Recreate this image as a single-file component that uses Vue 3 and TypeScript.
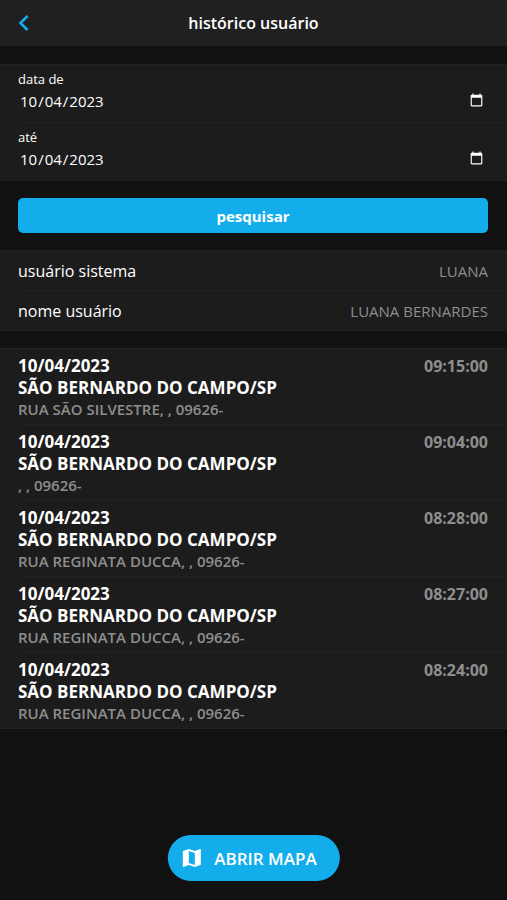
<script setup lang="ts">
import { ref } from 'vue'

interface Visit {
  date: string
  time: string
  city: string
  address: string
}

const dateFrom = ref('2023-10-04')
const dateTo = ref('2023-10-04')

const user = [
  { label: 'usuário sistema', value: 'LUANA' },
  { label: 'nome usuário', value: 'LUANA BERNARDES' },
]

const city = 'SÃO BERNARDO DO CAMPO/SP'
const visits: Visit[] = [
  { date: '10/04/2023', time: '09:15:00', city, address: 'RUA SÃO SILVESTRE, , 09626-' },
  { date: '10/04/2023', time: '09:04:00', city, address: ', , 09626-' },
  { date: '10/04/2023', time: '08:28:00', city, address: 'RUA REGINATA DUCCA, , 09626-' },
  { date: '10/04/2023', time: '08:27:00', city, address: 'RUA REGINATA DUCCA, , 09626-' },
  { date: '10/04/2023', time: '08:24:00', city, address: 'RUA REGINATA DUCCA, , 09626-' },
]
</script>

<template>
  <div class="page">
    <header class="navbar">
      <button class="back" type="button" aria-label="voltar">
        <svg width="12" height="18" viewBox="0 0 12 18" fill="none" stroke="currentColor" stroke-width="2.6">
          <path d="M9.500 2 L2.500 9 L9.500 16" />
        </svg>
      </button>
      <h1 class="title">histórico usuário</h1>
    </header>

    <main class="content">
      <form class="search" @submit.prevent>
        <div class="list">
          <div class="row field">
            <label for="date-from">data de</label>
            <input id="date-from" v-model="dateFrom" type="date" />
          </div>
          <div class="row field">
            <label for="date-to">até</label>
            <input id="date-to" v-model="dateTo" type="date" />
          </div>
        </div>
        <button class="submit" type="submit">pesquisar</button>
      </form>

      <dl class="list">
        <div v-for="item in user" :key="item.label" class="row info">
          <dt>{{ item.label }}</dt>
          <dd>{{ item.value }}</dd>
        </div>
      </dl>

      <ul class="list">
        <li v-for="visit in visits" :key="visit.time" class="row visit">
          <div class="place">
            <p class="strong">{{ visit.date }}</p>
            <p class="strong">{{ visit.city }}</p>
            <p class="address">{{ visit.address }}</p>
          </div>
          <time class="time">{{ visit.time }}</time>
        </li>
      </ul>
    </main>

    <button class="fab" type="button">
      <svg width="24" height="24" viewBox="0 0 24 24" fill="currentColor" aria-hidden="true">
        <path d="M20.5 3l-.16.03L15 5.1 9 3 3.36 4.9c-.21.07-.36.25-.36.48V20.500c0 .28.22.5.5.5l.16-.03L9 18.900l6 2.100 5.640-1.900c.21-.07.36-.25.36-.48V3.500c0-.28-.22-.5-.5-.5zM15 19l-6-2.110V5l6 2.110V19z" />
      </svg>
      <span>ABRIR MAPA</span>
    </button>
  </div>
</template>

<style>
body {
  background: #111;
}
</style>

<style scoped>
.page {
  min-height: 100vh;
  color: #fff;
  color-scheme: dark;
  font-family: 'Open Sans', 'Noto Sans', sans-serif;
  font-size: 15px;
}

button,
input {
  border: 0;
  padding: 0;
  background: none;
  color: inherit;
  font: inherit;
}

.navbar {
  display: grid;
  grid-template-columns: 24px 1fr 24px;
  align-items: center;
  height: 46px;
  padding: 0 18px;
  background: #202020;
}

.back {
  display: flex;
  color: #14adeb;
}

.title {
  margin: 0;
  text-align: center;
  font-size: 16px;
  font-weight: 600;
}

.content {
  display: flex;
  flex-direction: column;
  gap: 17px;
  padding: 18px 0 100px;
}

.search {
  display: flex;
  flex-direction: column;
  gap: 17px;
}

.list {
  margin: 0;
  padding: 0;
  list-style: none;
  background: #1c1c1c;
  border-top: 1px solid #222;
  border-bottom: 1px solid #222;
}

.row {
  margin-left: 18px;
  padding-right: 19px;
}

.row + .row {
  border-top: 1px solid #222;
}

.field {
  display: flex;
  flex-direction: column;
  padding-top: 5px;
  padding-bottom: 9px;
}

.field label {
  font-size: 13px;
  line-height: 18px;
}

.field input {
  height: 25px;
  padding: 0 2px 0 1px;
}

.submit {
  height: 35px;
  margin: 0 19px 0 18px;
  border-radius: 5px;
  background: #14adeb;
  font-weight: 700;
}

.info {
  display: flex;
  align-items: center;
  justify-content: space-between;
  height: 39px;
}

.info dt {
  font-size: 16px;
}

.info dd {
  margin: 0;
  color: #8e8e8e;
}

.visit {
  display: flex;
  justify-content: space-between;
  padding-top: 6px;
  padding-bottom: 4px;
}

.visit p {
  margin: 0;
}

.strong {
  font-size: 17px;
  font-weight: 700;
  line-height: 22px;
}

.address {
  color: #8e8e8e;
  font-size: 15px;
  font-weight: 600;
  line-height: 21px;
}

.time {
  color: #8e8e8e;
  font-size: 16px;
  font-weight: 700;
  line-height: 22px;
}

.fab {
  position: fixed;
  bottom: 19px;
  left: 50%;
  display: flex;
  align-items: center;
  gap: 11px;
  height: 46px;
  padding: 0 23px 0 12px;
  border-radius: 23px;
  background: #14adeb;
  font-size: 17px;
  font-weight: 600;
  transform: translateX(-50%);
}
</style>
